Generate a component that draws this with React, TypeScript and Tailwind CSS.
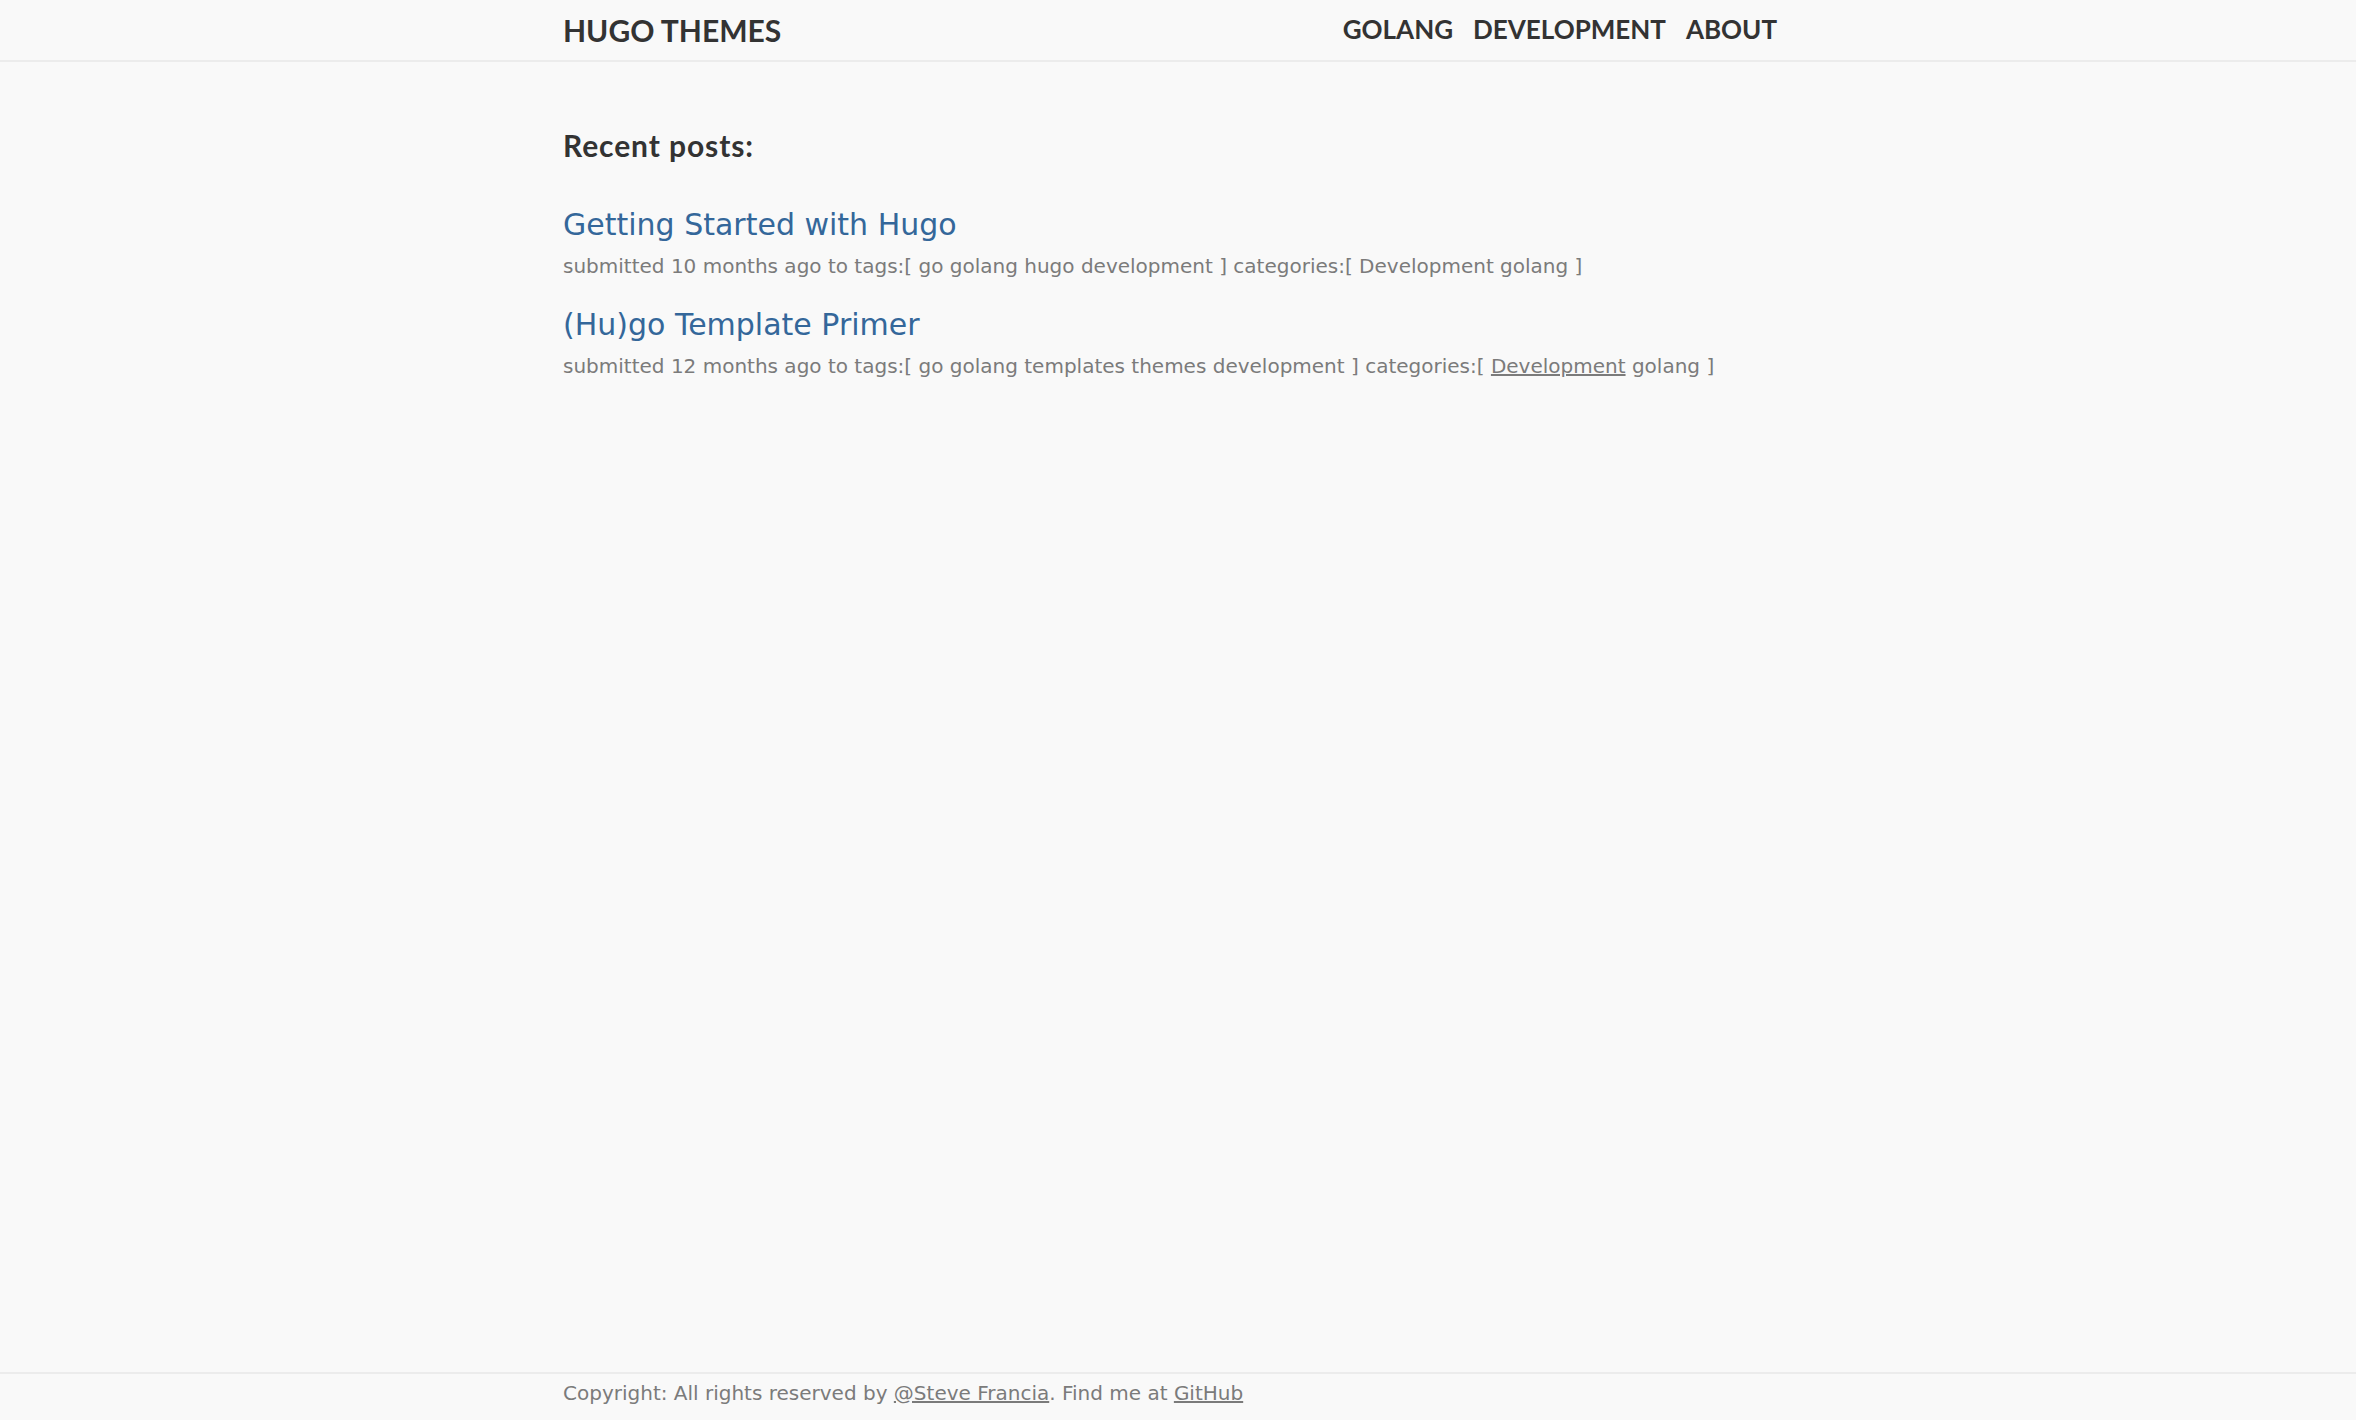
const heading = "font-['Lato',sans-serif] font-bold text-[#333]"
const body = "font-['DejaVu_Sans',sans-serif]"

const posts = [
  {
    title: "Getting Started with Hugo",
    when: "10 months ago",
    tags: ["go", "golang", "hugo", "development"],
    categories: ["Development", "golang"],
    underline: "",
  },
  {
    title: "(Hu)go Template Primer",
    when: "12 months ago",
    tags: ["go", "golang", "templates", "themes", "development"],
    categories: ["Development", "golang"],
    underline: "Development",
  },
]

function Post({ post, first }: { post: (typeof posts)[number]; first: boolean }) {
  return (
    <div className={first ? "" : "mt-[34px]"}>
      <a href="#" className={`${body} block text-[30px] leading-none text-[#34679a]`}>
        {post.title}
      </a>
      <div className={`${body} mt-[16px] text-[20px] leading-none text-[#7b7b7b]`}>
        submitted {post.when} to tags:[{" "}
        {post.tags.map(t => (
          <span key={t}>
            <a href="#">{t}</a>{" "}
          </span>
        ))}
        ] categories:[{" "}
        {post.categories.map(c => (
          <span key={c}>
            <a href="#" className={post.underline === c ? "underline" : ""}>{c}</a>{" "}
          </span>
        ))}
        ]
      </div>
    </div>
  )
}

export default function App() {
  return (
    <div className="flex min-h-screen flex-col bg-[#f9f9f9]">
      <header className="border-b-2 border-[#ececec]">
        <div className="mx-auto flex h-[60px] w-[1230px] items-center justify-between">
          <a href="#" className={`${heading} text-[30px] leading-none`}>HUGO THEMES</a>
          <nav className="mr-[16px] flex gap-[20px] pb-[3px]">
            {["GOLANG", "DEVELOPMENT", "ABOUT"].map(n => (
              <a key={n} href="#" className={`${heading} text-[26px] leading-none`}>{n}</a>
            ))}
          </nav>
        </div>
      </header>

      <main className="flex-1">
        <div className="mx-auto w-[1230px] pt-[68px]">
          <h2 className={`${heading} text-[30px] leading-none tracking-[0.03em]`}>Recent posts:</h2>
          <div className="mt-[50px]">
            {posts.map((p, i) => (
              <Post key={p.title} post={p} first={i === 0} />
            ))}
          </div>
        </div>
      </main>

      <footer className="h-[48px] border-t-2 border-[#ececec]">
        <div className={`${body} mx-auto w-[1230px] pt-[9px] text-[20px] leading-none text-[#7b7b7b]`}>
          Copyright: All rights reserved by <a href="#" className="underline">@Steve Francia</a>. Find me at{" "}
          <a href="#" className="underline">GitHub</a>
        </div>
      </footer>
    </div>
  )
}
